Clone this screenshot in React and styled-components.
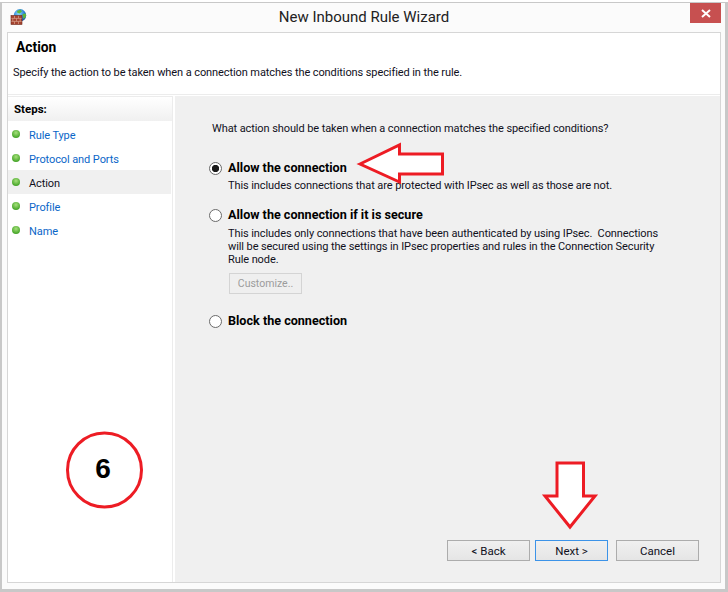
import React from 'react';
import styled, { createGlobalStyle } from 'styled-components';

const steps = [
  { name: 'Rule Type' },
  { name: 'Protocol and Ports' },
  { name: 'Action', current: true },
  { name: 'Profile' },
  { name: 'Name' },
];

const FirewallIcon = () => (
  <svg width="18" height="18" viewBox="0 0 18 18">
    <defs>
      <radialGradient id="globe" cx="40%" cy="35%" r="70%">
        <stop offset="0" stopColor="#8fdcf8" />
        <stop offset="0.6" stopColor="#2f86d8" />
        <stop offset="1" stopColor="#1a4f9c" />
      </radialGradient>
    </defs>
    <circle cx="10" cy="7.3" r="6.2" fill="url(#globe)" />
    <path d="M7 3 L10.5 1.5 L12 3.5 L9.5 5.5 L7.5 5 Z M12.5 6 L16 5.5 L15.8 9 L13.5 11 Z" fill="#5cb83c" />
    <rect x="1" y="7.5" width="11" height="9" fill="#a5432f" />
    <path d="M1 10.4 H12 M1 13.4 H12 M4.5 7.5 V10.4 M8.5 7.5 V10.4 M2.8 10.4 V13.4 M6.5 10.4 V13.4 M10.2 10.4 V13.4 M4.5 13.4 V16.5 M8.5 13.4 V16.5" stroke="#d9a08c" strokeWidth="0.7" fill="none" />
    <rect x="1" y="7.5" width="11" height="9" fill="none" stroke="#6e2a1c" strokeWidth="0.6" />
  </svg>
);

const CloseIcon = () => (
  <svg width="10" height="9" viewBox="0 0 10 9">
    <path d="M1 1 L9 8 M9 1 L1 8" stroke="#fff" strokeWidth="2" fill="none" />
  </svg>
);

const Annotations = () => (
  <Overlay width="728" height="592" viewBox="0 0 728 592">
    <polygon points="360,164 399.5,145 399.5,154 442.5,154 442.5,174 399.5,174 399.5,182" fill="#fff" stroke="#ed1c24" strokeWidth="3" />
    <polygon points="557,463 583.5,463 583.5,496 595,496 570,527 545,496 557,496" fill="#fff" stroke="#ed1c24" strokeWidth="3" />
    <circle cx="104.5" cy="470" r="37" fill="#fff" stroke="#ed1c24" strokeWidth="3" />
  </Overlay>
);

export default function App() {
  return (
    <>
      <GlobalStyle />
      <Window>
        <TitleBar>
          <AppIcon><FirewallIcon /></AppIcon>
          <Title>New Inbound Rule Wizard</Title>
          <CloseButton><CloseIcon /></CloseButton>
        </TitleBar>
        <Frame>
          <Header>
            <HeaderTitle>Action</HeaderTitle>
            <HeaderText>Specify the action to be taken when a connection matches the conditions specified in the rule.</HeaderText>
          </Header>
          <Body>
            <Sidebar>
              <StepsTitle>Steps:</StepsTitle>
              {steps.map(step => (
                <StepRow key={step.name} $current={step.current}>
                  <Dot />
                  <StepLabel $current={step.current}>{step.name}</StepLabel>
                </StepRow>
              ))}
            </Sidebar>
            <Main>
              <Question>What action should be taken when a connection matches the specified conditions?</Question>
              <Option $top={23}>
                <Radio $checked />
                <OptionLabel>Allow the connection</OptionLabel>
              </Option>
              <Description>This includes connections that are protected with IPsec as well as those are not.</Description>
              <Option $top={15}>
                <Radio />
                <OptionLabel>Allow the connection if it is secure</OptionLabel>
              </Option>
              <Description $top={4}>
                This includes only connections that have been authenticated by using IPsec.&nbsp; Connections<br />
                will be secured using the settings in IPsec properties and rules in the Connection Security<br />
                Rule node.
              </Description>
              <CustomizeButton disabled>Customize..</CustomizeButton>
              <Option $top={19}>
                <Radio />
                <OptionLabel>Block the connection</OptionLabel>
              </Option>
              <Footer>
                <WizardButton $width={83}>&lt; Back</WizardButton>
                <WizardButton $width={73} $focused>Next &gt;</WizardButton>
                <WizardButton $width={83} $left={3}>Cancel</WizardButton>
              </Footer>
            </Main>
          </Body>
        </Frame>
        <Annotations />
        <Number6>6</Number6>
      </Window>
    </>
  );
}

const GlobalStyle = createGlobalStyle`
  html, body {
    margin: 0;
    padding: 0;
    background: #ffffff;
  }
  * {
    box-sizing: border-box;
  }
`;

const Window = styled.div`
  position: relative;
  width: 728px;
  height: 592px;
  margin: 0;
  padding: 0 7px 9px 7px;
  display: flex;
  flex-direction: column;
  background: #fbfbfb;
  border-top: 2px solid #ffffff;
  box-shadow: inset 2px 1px 0 #c8c8c8, inset -3px 0 0 #c8c8c8, inset 0 -3px 0 #c8c8c8;
  font-family: Roboto, "Open Sans", sans-serif;
  font-size: 11px;
  letter-spacing: -0.09px;
  color: #10101c;
  overflow: hidden;
`;

const TitleBar = styled.div`
  position: relative;
  flex: 0 0 30px;
  display: flex;
  align-items: center;
  justify-content: center;
`;

const AppIcon = styled.div`
  position: absolute;
  left: 3px;
  top: 6px;
  line-height: 0;
`;

const Title = styled.div`
  font-size: 15px;
  letter-spacing: 0;
  color: #222;
  margin-top: -1px;
`;

const CloseButton = styled.div`
  position: absolute;
  right: 0;
  top: 1px;
  width: 31px;
  height: 20px;
  background: #c75050;
  display: flex;
  align-items: center;
  justify-content: center;
`;

const Frame = styled.div`
  flex: 1;
  min-height: 0;
  display: flex;
  flex-direction: column;
  border: 1px solid #d6d6d6;
  background: #ffffff;
`;

const Header = styled.div`
  flex: 0 0 62px;
  padding: 6px 0 0 5px;
  border-bottom: 1px solid #ececec;
`;

const HeaderTitle = styled.div`
  font-size: 13.8px;
  letter-spacing: 0;
  font-weight: 700;
  color: #000;
  margin-left: 3px;
`;

const HeaderText = styled.div`
  margin-top: 11px;
`;

const Body = styled.div`
  flex: 1;
  min-height: 0;
  display: flex;
  padding-top: 1px;
`;

const Sidebar = styled.div`
  flex: 0 0 165px;
  border-right: 1px solid #ececec;
  border-top: 1px solid #ececec;
`;

const StepsTitle = styled.div`
  height: 24px;
  margin-bottom: 1px;
  line-height: 25px;
  padding-left: 6px;
  font-size: 11.5px;
  letter-spacing: 0;
  font-weight: 700;
  color: #000;
  background: linear-gradient(#ffffff, #f0f0f0);
`;

const StepRow = styled.div`
  height: 24px;
  margin-right: 1px;
  display: flex;
  align-items: center;
  padding-left: 4px;
  background: ${p => (p.$current ? '#f0f0f0' : 'transparent')};
`;

const Dot = styled.span`
  width: 8px;
  height: 8px;
  border-radius: 50%;
  background: radial-gradient(circle at 50% 35%, #a6e07c, #4aa82c 70%, #3a8f22);
`;

const StepLabel = styled.span`
  margin: 2px 0 0 9px;
  color: ${p => (p.$current ? '#10101c' : '#0a66c8')};
`;

const Main = styled.div`
  flex: 1;
  margin-left: 2px;
  padding: 25px 21px 21px 34px;
  display: flex;
  flex-direction: column;
  background: #f0f0f0;
`;

const Question = styled.div`
  margin-left: 3px;
  line-height: 16px;
`;

const Option = styled.div`
  margin-top: ${p => p.$top}px;
  display: flex;
  align-items: center;
  gap: 6px;
  height: 16px;
`;

const Radio = styled.span`
  width: 13px;
  height: 13px;
  border-radius: 50%;
  border: 1px solid #6a6a6a;
  background: ${p => (p.$checked ? 'radial-gradient(circle, #1a1a1a 0 3.4px, #ffffff 3.9px)' : '#ffffff')};
`;

const OptionLabel = styled.span`
  margin-top: -2px;
  font-weight: 700;
  font-size: 12.6px;
  letter-spacing: 0;
  color: #000;
`;

const Description = styled.div`
  margin: ${p => p.$top || 3}px 0 0 19px;
  line-height: 13px;
`;

const CustomizeButton = styled.button`
  align-self: flex-start;
  margin: 7px 0 0 20px;
  width: 73px;
  height: 21px;
  padding: 0;
  border: 1px solid #d4d4d4;
  background: #efefef;
  color: #9c9c9c;
  font-family: inherit;
  font-size: 10.5px;
`;

const Footer = styled.div`
  margin-top: auto;
  display: flex;
  justify-content: flex-end;
  gap: 5px;
`;

const WizardButton = styled.button`
  width: ${p => p.$width}px;
  height: 21px;
  margin-left: ${p => p.$left || 0}px;
  padding: 0;
  border: 1px solid ${p => (p.$focused ? '#3c93e8' : '#acacac')};
  background: linear-gradient(#f0f0f0, #e5e5e5);
  color: #10101c;
  font-family: inherit;
  font-size: 11.5px;
`;

const Overlay = styled.svg`
  position: absolute;
  left: 0;
  top: -2px;
  pointer-events: none;
`;

const Number6 = styled.div`
  position: absolute;
  left: 83px;
  top: 450px;
  width: 40px;
  text-align: center;
  font-family: "Liberation Sans", sans-serif;
  font-size: 28px;
  font-weight: 700;
  line-height: 34px;
  color: #000;
`;
